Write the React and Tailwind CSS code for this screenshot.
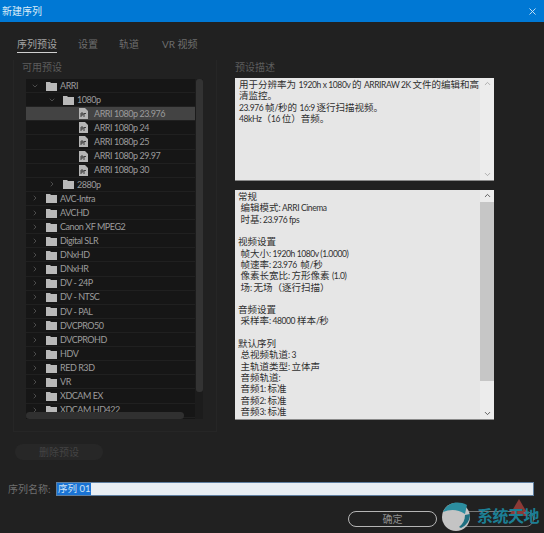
import { ChevronDown, ChevronRight, ChevronUp, X } from "lucide-react";

const presets = [
  { label: "ARRI", depth: 0, open: true },
  { label: "1080p", depth: 1, open: true },
  { label: "ARRI 1080p 23.976", depth: 2, file: true, selected: true },
  { label: "ARRI 1080p 24", depth: 2, file: true },
  { label: "ARRI 1080p 25", depth: 2, file: true },
  { label: "ARRI 1080p 29.97", depth: 2, file: true },
  { label: "ARRI 1080p 30", depth: 2, file: true },
  { label: "2880p", depth: 1 },
  { label: "AVC-Intra", depth: 0 },
  { label: "AVCHD", depth: 0 },
  { label: "Canon XF MPEG2", depth: 0 },
  { label: "Digital SLR", depth: 0 },
  { label: "DNxHD", depth: 0 },
  { label: "DNxHR", depth: 0 },
  { label: "DV - 24P", depth: 0 },
  { label: "DV - NTSC", depth: 0 },
  { label: "DV - PAL", depth: 0 },
  { label: "DVCPRO50", depth: 0 },
  { label: "DVCPROHD", depth: 0 },
  { label: "HDV", depth: 0 },
  { label: "RED R3D", depth: 0 },
  { label: "VR", depth: 0 },
  { label: "XDCAM EX", depth: 0 },
  { label: "XDCAM HD422", depth: 0 },
];

const description = "用于分辨率为 1920h x 1080v 的 ARRIRAW 2K 文件的编辑和高清监控。\n23.976 帧/秒的 16:9 逐行扫描视频。\n48kHz（16 位）音频。";

const summary = [
  "常规",
  " 编辑模式: ARRI Cinema",
  " 时基: 23.976 fps",
  "",
  "视频设置",
  " 帧大小: 1920h 1080v (1.0000)",
  " 帧速率: 23.976  帧/秒",
  " 像素长宽比: 方形像素 (1.0)",
  " 场: 无场（逐行扫描）",
  "",
  "音频设置",
  " 采样率: 48000 样本/秒",
  "",
  "默认序列",
  " 总视频轨道: 3",
  " 主轨道类型: 立体声",
  " 音频轨道:",
  " 音频1: 标准",
  " 音频2: 标准",
  " 音频3: 标准",
].join("\n");

// latin runs are narrower than the CJK ones in these boxes
function MixedText({ text }) {
  return text.split(/([\x21-\x7e][\x20-\x7e]*)/).map((part, i) =>
    i % 2 ? (
      <span key={i} className="text-[8.5px] leading-[0px] tracking-[-0.4px]">{part}</span>
    ) : (
      part
    )
  );
}

function FolderIcon() {
  return (
    <svg width="11" height="10" viewBox="0 0 11 10" className="shrink-0">
      <path d="M0 1h4l1 1h6v8H0z" fill="#b9b9b9" />
    </svg>
  );
}

function PrIcon() {
  return (
    <svg width="9" height="11" viewBox="0 0 9 11" className="shrink-0">
      <path d="M0 0h6l3 3v8H0z" fill="#b5b5b5" />
      <path d="M2 9V5h2v2H2M5 9V5.5h2" fill="none" stroke="#333" strokeWidth="0.9" />
    </svg>
  );
}

function TreeRow({ item }) {
  const pad = ["pl-[5px]", "pl-[22px]", "pl-[53px]"][item.depth];
  return (
    <div className={`flex h-[14.12px] shrink-0 items-center border-b border-[#202020] ${pad} ${item.selected ? "bg-[#434343]" : ""}`}>
      {!item.file && (
        <span className="mr-[8px] w-[7px] text-[#666]">
          {item.open ? <ChevronDown size={8} strokeWidth={2} /> : <ChevronRight size={8} strokeWidth={2} />}
        </span>
      )}
      {item.file ? <PrIcon /> : <FolderIcon />}
      <span className={`whitespace-nowrap text-[9px] tracking-[-0.45px] text-[#9c9c9c] ${item.file ? "ml-[6px]" : "ml-[3px]"}`}>{item.label}</span>
    </div>
  );
}

function ScrollArrows() {
  return (
    <div className="flex h-full w-[14px] shrink-0 flex-col items-center justify-between bg-[#ececec] py-[1px] text-[#999]">
      <ChevronUp size={9} strokeWidth={2} />
      <ChevronDown size={9} strokeWidth={2} />
    </div>
  );
}

export default function App() {
  return (
    <div className="flex h-[533px] w-[544px] flex-col overflow-hidden bg-[#212121] font-['Lato','Noto_Sans_CJK_SC',sans-serif]">
      <div className="flex h-[22px] shrink-0 items-center justify-between bg-[#0078d4] pl-[2px] pr-[6px]">
        <span className="text-[10px] text-[#dcecf8]">新建序列</span>
        <X size={11} className="text-[#cfe6f7]" />
      </div>

      <div className="flex h-[31px] shrink-0 items-end gap-[21px] pl-[17px] text-[10px] text-[#6e6e6e]">
        <span className="border-b border-[#cfcfcf] pb-[1px] leading-[14px] text-[#a4a4a4]">序列预设</span>
        <span className="pb-[2px] leading-[14px]">设置</span>
        <span className="pb-[2px] leading-[14px]">轨道</span>
        <span className="pb-[2px] pl-[2px] leading-[14px]">VR 视频</span>
      </div>

      <div className="mx-[13px] mt-[7px] flex shrink-0 gap-[18px]">
        <div className="flex w-[204px] shrink-0 flex-col border border-t-0 border-[#262626] pb-[12px]">
          <div className="ml-[8px] h-[19px] text-[10px] leading-[14px] text-[#5c5c5c]">可用预设</div>
          <div className="relative ml-[12px] flex h-[340px] w-[177px] flex-col overflow-hidden bg-[#161616]">
            {presets.map((item) => (
              <TreeRow key={item.label} item={item} />
            ))}
            <div className="absolute right-0 top-0 h-full w-[8px] bg-[#1c1c1c]">
              <div className="ml-[1px] h-[313px] w-[7px] rounded-[3px] bg-[#333333]" />
            </div>
            <div className="absolute bottom-0 left-0 h-[7px] w-[158px] rounded-[4px] bg-[#303030]" />
          </div>
        </div>

        <div className="flex w-[259px] shrink-0 flex-col">
          <div className="h-[18px] text-[10px] leading-[14px] text-[#5c5c5c]">预设描述</div>
          <div className="flex h-[103px] border-b border-[#8a8a8a] bg-[#e6e6e6]">
            <div className="min-w-0 flex-1 whitespace-pre-wrap pl-[4px] pt-[1px] text-[9.5px] leading-[11.4px] text-[#303030]">
              <MixedText text={description} />
            </div>
            <ScrollArrows />
          </div>
          <div className="mt-[9px] flex h-[230px] overflow-hidden border-b border-[#8a8a8a] bg-[#e6e6e6]">
            <div className="min-w-0 flex-1 whitespace-pre pl-[3px] pt-[1px] text-[9.5px] leading-[11.32px] text-[#303030]">
              <MixedText text={summary} />
            </div>
            <div className="flex h-full w-[14px] shrink-0 flex-col items-center bg-[#ececec] py-[1px] text-[#555]">
              <ChevronUp size={9} strokeWidth={2.5} />
              <div className="mt-[2px] h-[179px] w-full bg-[#c6c6c6]" />
              <div className="flex-1" />
              <ChevronDown size={9} strokeWidth={2.5} />
            </div>
          </div>
        </div>
      </div>

      <div className="ml-[15px] mt-[12px] flex h-[16px] w-[88px] shrink-0 items-center justify-center rounded-[8px] bg-[#272727] text-[10px] text-[#444]">
        删除预设
      </div>

      <div className="mt-[22px] flex h-[14px] shrink-0 items-center pl-[8px]">
        <span className="w-[48px] shrink-0 text-[10px] text-[#6f6f6f]">序列名称:</span>
        <div className="flex h-[14px] w-[478px] items-center border border-[#5f7fa0] bg-[#e8eef3]">
          <span className="bg-[#1a73d4] px-[1px] text-[9.5px] leading-[12px] text-[#cfe3f6]">序列 01</span>
        </div>
      </div>

      <div className="relative mt-[15px] flex shrink-0 gap-[8px] pl-[348px]">
        <div className="flex h-[16px] w-[89px] shrink-0 items-center justify-center rounded-[8px] border border-[#b5b5b5] text-[10px] text-[#8f8f8f]">
          确定
        </div>
        <div className="h-[16px] w-[89px] shrink-0 rounded-[8px] border border-[#777]" />
        {/* site watermark sits over the cancel button */}
        <div className="absolute left-[439px] top-[-11px] flex items-center">
          <svg width="34" height="32" viewBox="0 0 34 32">
            <circle cx="17" cy="17" r="14" fill="#c4c4c4" />
            <path d="M4 12C8 3 18 0 28 5l-2 9c-7-5-15-5-22-2z" fill="#2c8ea0" />
            <path d="M22 28c6-3 9-8 9-14l-5 1c0 5-2 9-6 12z" fill="#1f6f80" />
          </svg>
          <span className="relative ml-[4px] whitespace-nowrap text-[16px] font-bold leading-none tracking-[-0.5px] text-[#1c7f94]">
            <svg width="20" height="17" viewBox="0 0 20 17" className="absolute left-[32px] top-[-9px]">
              <path d="M10 0l10 17H0z" fill="#8c3a36" />
            </svg>
            <span className="relative">系统天地</span>
          </span>
        </div>
      </div>
    </div>
  );
}
